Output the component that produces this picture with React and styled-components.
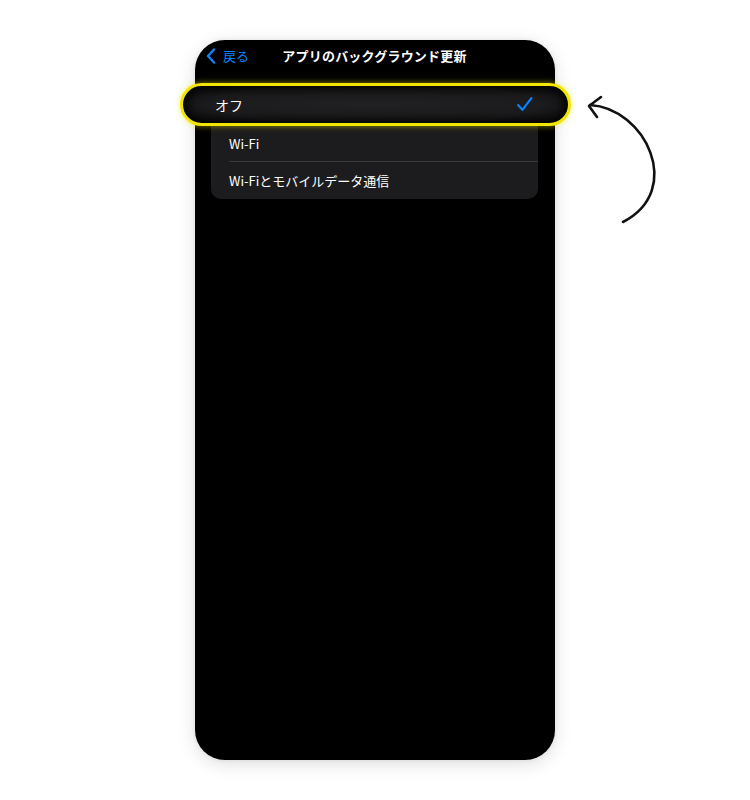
import React from "react";
import styled, { createGlobalStyle } from "styled-components";

const Global = createGlobalStyle`
  html, body { margin: 0; padding: 0; background: #ffffff; }
  body { font-family: "Noto Sans CJK JP", "Noto Sans", sans-serif; }
`;

const Page = styled.div`
  position: relative;
  width: 750px;
  height: 800px;
  display: flex;
  justify-content: center;
  padding-top: 40px;
  box-sizing: border-box;
`;

const Phone = styled.div`
  position: relative;
  width: 360px;
  height: 720px;
  background: #000;
  border-radius: 30px;
  box-shadow: 0 4px 18px rgba(0, 0, 0, 0.13), 0 0 4px rgba(0, 0, 0, 0.08);
  display: flex;
  flex-direction: column;
  padding: 0 17px 0 16px;
  box-sizing: border-box;
`;

const NavBar = styled.div`
  position: relative;
  height: 30px;
  display: flex;
  align-items: center;
  justify-content: center;
`;

const Back = styled.div`
  position: absolute;
  left: -5px;
  top: 6px;
  display: flex;
  align-items: center;
  gap: 7px;
  color: #0a84ff;
  font-size: 13px;
`;

const Title = styled.div`
  color: #fff;
  font-size: 13px;
  font-weight: 700;
  letter-spacing: 0.2px;
`;

const List = styled.div`
  margin-top: 18px;
  background: #1c1c1e;
  border-radius: 10px;
  display: flex;
  flex-direction: column;
  overflow: hidden;
`;

const Row = styled.div`
  height: 37px;
  display: flex;
  align-items: center;
  justify-content: space-between;
  padding: 0 16px 0 18px;
  color: #fff;
  font-size: 13px;
  position: relative;
  & > * { visibility: ${(p) => (p.$covered ? "hidden" : "visible")}; }
  &:not(:last-child)::after {
    content: "";
    position: absolute;
    left: 18px;
    right: 0;
    bottom: 0;
    height: 1px;
    background: #38383a;
  }
`;

const Highlight = styled.div`
  position: absolute;
  left: 180px;
  top: 83px;
  width: 391px;
  height: 43px;
  box-sizing: border-box;
  border: 3px solid #f2e600;
  border-radius: 22px;
  background: radial-gradient(ellipse 60% 80% at 50% 50%, #202022 0%, #1c1c1e 70%, #0d0d0e 100%);
  box-shadow: 0 0 6px rgba(242, 230, 0, 0.55), inset 0 0 10px 4px rgba(0, 0, 0, 0.85);
  display: flex;
  align-items: center;
  justify-content: space-between;
  padding: 0 35px 0 32px;
  color: #fff;
  font-size: 14px;
`;

const Arrow = styled.svg`
  position: absolute;
  left: 0;
  top: 0;
  pointer-events: none;
`;

const Check = ({ size = 16 }) => (
  <svg width={size} height={size} viewBox="0 0 16 16" fill="none">
    <path d="M2 8.6 L6 13 L14.5 2" stroke="#0a84ff" strokeWidth="2" strokeLinecap="round" strokeLinejoin="round" />
  </svg>
);

const Chevron = () => (
  <svg width="10" height="16" viewBox="0 0 10 16" fill="none">
    <path d="M8 1.5 L2 8 L8 14.5" stroke="#0a84ff" strokeWidth="2.4" strokeLinecap="round" strokeLinejoin="round" />
  </svg>
);

const options = ["オフ", "Wi-Fi", "Wi-Fiとモバイルデータ通信"];

export default function App() {
  return (
    <>
      <Global />
      <Page>
        <Phone>
          <NavBar>
            <Back>
              <Chevron />
              <span>戻る</span>
            </Back>
            <Title>アプリのバックグラウンド更新</Title>
          </NavBar>
          <List>
            {options.map((o, i) => (
              <Row key={o} $covered={i === 0}>
                <span>{o}</span>
                {i === 0 && <Check size={14} />}
              </Row>
            ))}
          </List>
        </Phone>
        <Highlight>
          <span>オフ</span>
          <Check size={17} />
        </Highlight>
        <Arrow width="750" height="800" viewBox="0 0 750 800">
          <path d="M590 105 C 645 108, 685 190, 623 222" stroke="#111" strokeWidth="2.6" fill="none" strokeLinecap="round" />
          <path d="M601 97 L589 106 L597 117" stroke="#111" strokeWidth="2.6" fill="none" strokeLinecap="round" strokeLinejoin="round" />
        </Arrow>
      </Page>
    </>
  );
}
